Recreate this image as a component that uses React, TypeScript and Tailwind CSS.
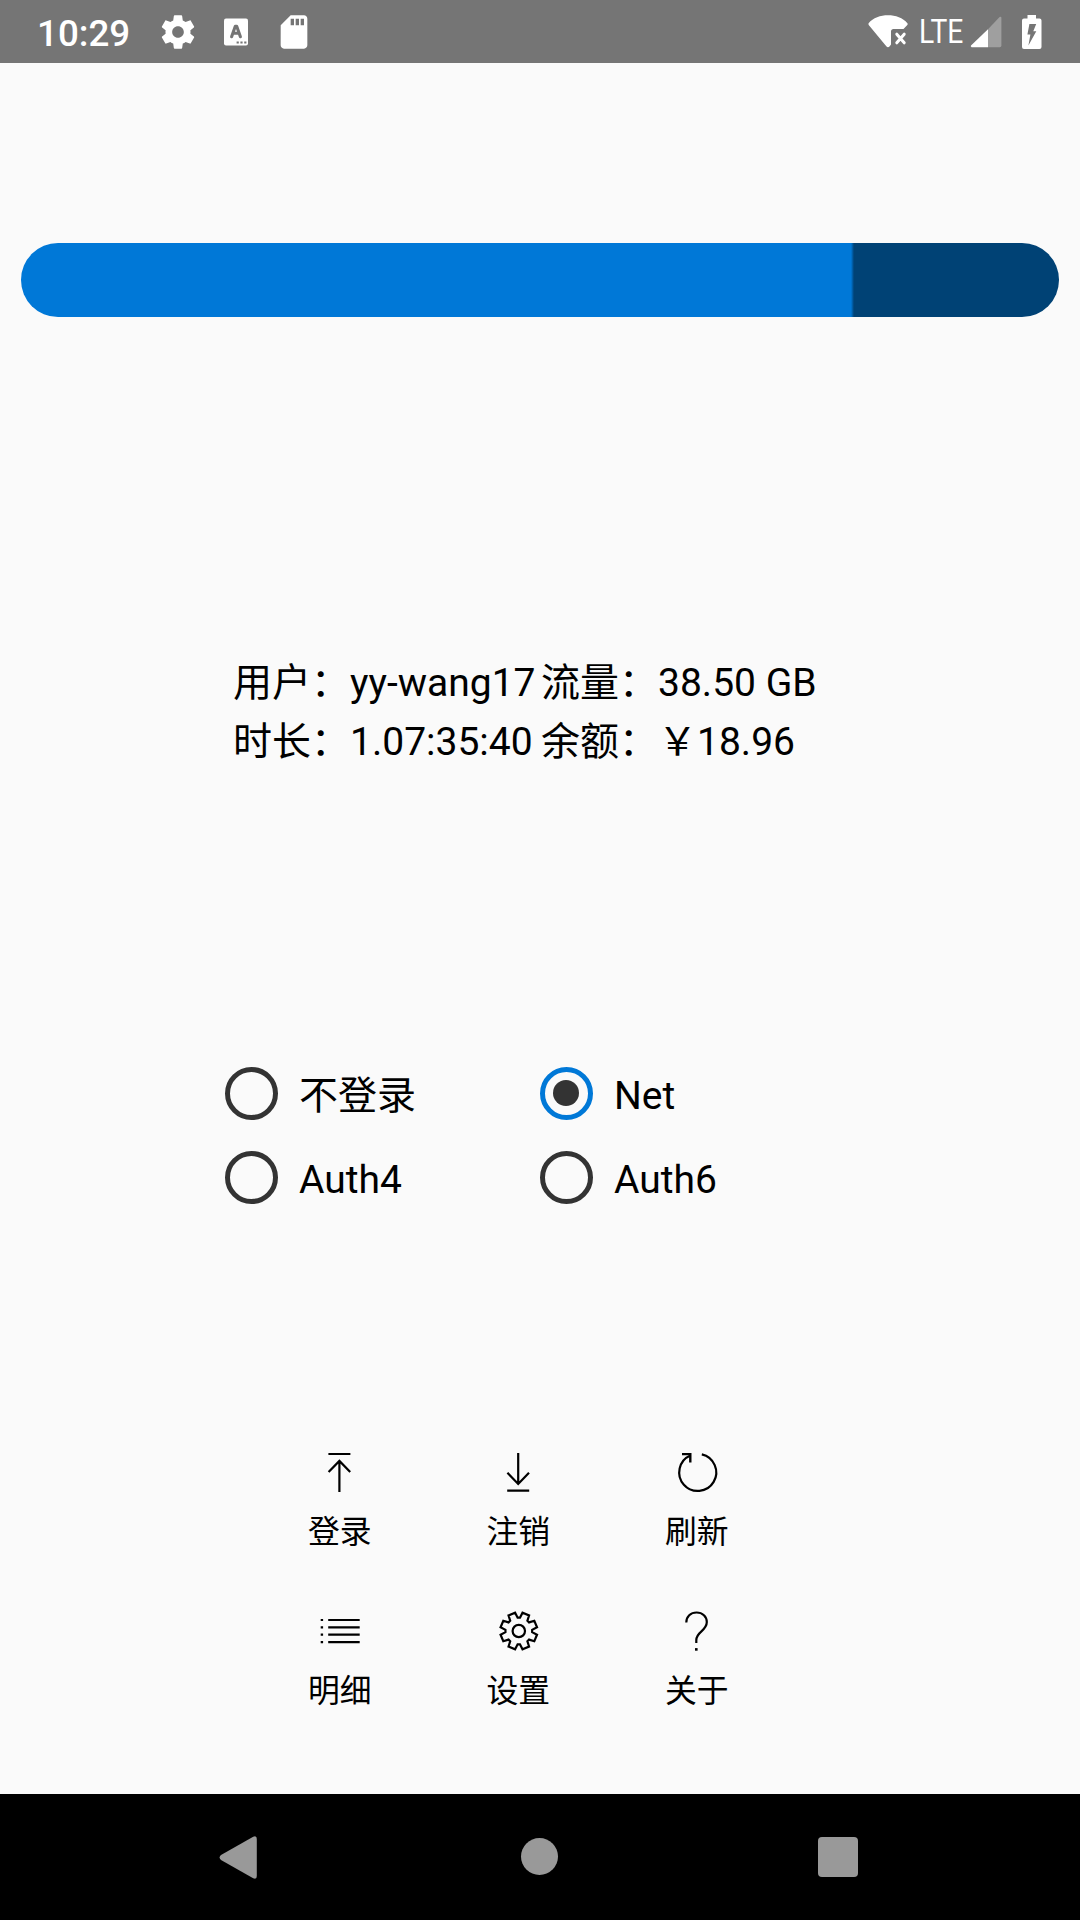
import React from 'react'

const stats = [
  ['用户：', 'yy-wang17'],
  ['流量：', '38.50 GB'],
  ['时长：', '1.07:35:40'],
  ['余额：', '￥18.96'],
]

const networks = [
  { name: '不登录', selected: false },
  { name: 'Net', selected: true },
  { name: 'Auth4', selected: false },
  { name: 'Auth6', selected: false },
]

function gearPath() {
  const points: string[] = []
  for (let i = 0; i < 8; i++) {
    const mid = i * 45 + 22.5
    const corners: [number, number][] = [
      [13.4, -17.5],
      [18.6, -11],
      [18.6, 11],
      [13.4, 17.5],
    ]
    corners.forEach(([r, d]) => {
      const a = ((mid + d) * Math.PI) / 180
      points.push(`${(20.8 + r * Math.sin(a)).toFixed(2)} ${(20 - r * Math.cos(a)).toFixed(2)}`)
    })
  }
  return `M${points.join('L')}Z`
}

const actions = [
  { name: '登录', icon: <path d="M8.4 2H30.4M19.4 40V8.5M8.6 20.1L19.4 8.9L30.2 20.1" /> },
  { name: '注销', icon: <path d="M9.2 38.7H31.2M20.2 1V31.9M9.4 20.7L20.2 31.9L31 20.7" /> },
  {
    name: '刷新',
    icon: (
      <>
        <path d="M24.8 2.4A18.5 18.5 0 1 1 13.3 3.5" />
        <path d="M5 2.1H13.3V10.5" strokeWidth="2.4" />
      </>
    ),
  },
  {
    name: '明细',
    icon: <path d="M8.2 9H39.7M8.2 16.4H39.7M8.2 23.7H39.7M8.2 31.2H39.7M.7 9H3.1M.7 16.4H3.1M.7 23.7H3.1M.7 31.2H3.1" />,
  },
  {
    name: '设置',
    icon: (
      <>
        <path d={gearPath()} />
        <circle cx="20.8" cy="20" r="6.2" />
      </>
    ),
  },
  {
    name: '关于',
    icon: (
      <>
        <path d="M9.3 11.5C9.3 5.4 13.6 1.5 19.6 1.5C25.5 1.5 29.8 5.6 29.8 11.1C29.8 20.1 19.3 20.6 19.3 29.1V32.1" />
        <path d="M19.3 37.1V39.7" strokeWidth="2.6" />
      </>
    ),
  },
]

function StatusBar() {
  return (
    <header className="flex h-[63px] items-center bg-[#757575] text-white">
      <span className="ml-[37px] w-[121px] pt-[4px] text-[36.75px] leading-[60px] font-medium">10:29</span>
      <svg className="size-[40px]" viewBox="0 0 24 24" fill="currentColor">
        <path d="M19.43 12.98c.04-.32.07-.64.07-.98s-.03-.66-.07-.98l2.11-1.65c.19-.15.24-.42.12-.64l-2-3.46c-.12-.22-.39-.3-.61-.22l-2.49 1c-.52-.4-1.08-.73-1.69-.98l-.38-2.65C14.46 2.18 14.25 2 14 2h-4c-.25 0-.46.18-.49.42l-.38 2.65c-.61.25-1.17.59-1.69.98l-2.49-1c-.23-.09-.49 0-.61.22l-2 3.46c-.13.22-.07.49.12.64l2.11 1.65c-.04.32-.07.65-.07.98s.03.66.07.98l-2.11 1.65c-.19.15-.24.42-.12.64l2 3.46c.12.22.39.3.61.22l2.49-1c.52.4 1.08.73 1.69.98l.38 2.65c.03.24.24.42.49.42h4c.25 0 .46-.18.49-.42l.38-2.65c.61-.25 1.17-.59 1.69-.98l2.49 1c.23.09.49 0 .61-.22l2-3.46c.12-.22.07-.49-.12-.64l-2.11-1.65zM12 15.5c-1.93 0-3.5-1.57-3.5-3.5s1.57-3.5 3.5-3.5 3.5 1.57 3.5 3.5-1.57 3.5-3.5 3.5z" />
      </svg>
      <svg className="ml-[26px] h-[28px] w-[24px]" viewBox="0 0 24 28">
        <rect y="0.5" width="24" height="27" rx="2" fill="currentColor" />
        <path d="M7.6 18.7L11.3 8.2H12.7L16.4 18.7M8.8 15.2H15.2" stroke="#757575" strokeWidth="3.1" strokeLinecap="round" strokeLinejoin="round" fill="none" />
        <path d="M12.6 24.5h2.2M16.4 24.5h2.2M20.2 24.5H22.4" stroke="#757575" strokeWidth="2" />
      </svg>
      <svg className="ml-[26px] size-[40px]" viewBox="0 0 24 24" fill="currentColor">
        <path d="M18 2h-8L4.02 8 4 20c0 1.1.9 2 2 2h12c1.1 0 2-.9 2-2V4c0-1.1-.9-2-2-2zm-6 6h-2V4h2v4zm3 0h-2V4h2v4zm3 0h-2V4h2v4z" />
      </svg>
      <svg className="ml-[554px] h-[33px] w-[40px]" viewBox="0 0 40 33">
        <path d="M.6 8.2C5 2.8 12.5.2 20 .2S35 2.8 39.4 8.2C39.9 8.8 39.8 9.4 39.3 9.9L35.5 14H25.5Q23 14 23 16.5V29.5L21.7 31.3Q20 33 18.3 31.3L.7 9.9Q.2 9 .6 8.2Z" fill="currentColor" />
        <path d="M28.8 19.2L36.2 27.8M36.2 19.2L28.8 27.8" stroke="currentColor" strokeWidth="3" strokeLinecap="round" />
      </svg>
      <span className="ml-[11px] w-[51px] origin-left scale-x-[0.86] text-[32.8px] leading-[60px]">LTE</span>
      <svg className="h-[32px] w-[32px]" viewBox="0 0 32 32">
        <path d="M18 13.2V31.2H1.6Q.2 30.4 1 29.6Z" fill="currentColor" />
        <path d="M18 13.2L29.6 1Q31.4 0 31.4 2V29.6Q31.4 31.2 29.8 31.2H18Z" fill="#9f9f9f" />
      </svg>
      <svg className="ml-[20px] h-[34px] w-[20px]" viewBox="0 0 20 34">
        <path d="M5.5 0H14V3.5H17.5Q19.5 3.5 19.5 5.5V32Q19.5 34 17.5 34H2Q0 34 0 32V5.5Q0 3.5 2 3.5H5.5Z" fill="currentColor" />
        <path d="M7.4 9H14.2L11.3 16.3H14.3L6.4 30.6L8.4 19.6H5.4Z" fill="#757575" />
      </svg>
    </header>
  )
}

function Radio({ name, selected }: { name: string; selected: boolean }) {
  return (
    <label className="flex h-[84px] items-center gap-[21px]">
      <svg className="size-[53px] shrink-0" viewBox="0 0 53 53">
        <circle cx="26.5" cy="26.5" r="24" fill="none" strokeWidth="5" stroke={selected ? '#0078d7' : '#333333'} />
        {selected && <circle cx="26" cy="26" r="13" fill="#333333" />}
      </svg>
      <span className="pt-[4px] text-[39px] leading-[60px]">{name}</span>
    </label>
  )
}

export default function App() {
  return (
    <div className="flex h-[1920px] w-[1080px] flex-col overflow-hidden bg-[#fafafa] font-['Roboto','Noto_Sans_CJK_SC',sans-serif] text-black">
      <StatusBar />
      <main className="flex h-[1731px] flex-col">
        <div className="mx-[21px] mt-[180px] h-[74px] rounded-full bg-[linear-gradient(90deg,#0078d7_830px,#004275_833px)]" />
        <section className="mt-[337px] ml-[233px] grid grid-cols-[308px_400px] text-[39px] leading-[59px] whitespace-nowrap">
          {stats.map(([label, value]) => (
            <div key={label}>
              {label}
              {value}
            </div>
          ))}
        </section>
        <section className="mt-[279.5px] ml-[225px] grid grid-cols-[315px_315px]">
          {networks.map((n) => (
            <Radio key={n.name} {...n} />
          ))}
        </section>
        <section className="mt-[232.5px] ml-[250.5px] grid grid-cols-[178.5px_178.5px_178.5px]">
          {actions.map((a) => (
            <button key={a.name} className="flex h-[159px] flex-col items-center">
              <svg className="size-[40px] overflow-visible" viewBox="0 0 40 40" fill="none" stroke="currentColor" strokeWidth="2.2">
                {a.icon}
              </svg>
              <span className="mt-[18px] text-[31.8px] leading-[44px]">{a.name}</span>
            </button>
          ))}
        </section>
      </main>
      <nav className="flex h-[126px] items-center bg-black text-[#999999]">
        <svg className="ml-[219px] h-[43px] w-[38px]" viewBox="0 0 38 43" fill="currentColor">
          <path d="M34.2.8Q37.8-.8 37.8 3V40Q37.8 43.8 34.2 42.2L2 23.9Q-.8 21.5 2 19.1Z" />
        </svg>
        <div className="mb-px ml-[264px] size-[37px] rounded-full bg-[#999999]" />
        <div className="ml-[260px] size-[40px] rounded-[4px] bg-[#999999]" />
      </nav>
    </div>
  )
}
